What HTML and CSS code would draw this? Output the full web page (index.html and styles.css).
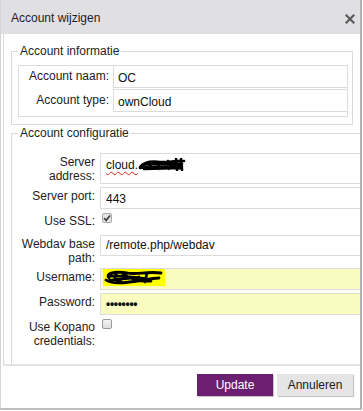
FILE: index.html
```html
<!DOCTYPE html>
<html lang="nl">
<head>
<meta charset="utf-8">
<title>Account wijzigen</title>
<link rel="stylesheet" href="styles.css">
</head>
<body>
<div class="dialog">
  <div class="header">
    <span class="title">Account wijzigen</span>
    <svg class="close" width="10" height="10" viewBox="0 0 10 10"><path d="M1.5 1.5 L8.5 8.5 M8.5 1.5 L1.5 8.5" stroke="#5c5c5c" stroke-width="2.2" stroke-linecap="square"/></svg>
  </div>
  <div class="panel">
    <fieldset class="fs-info">
      <legend>Account informatie</legend>
      <div class="info-box">
        <div class="info-row">
          <div class="info-label">Account naam:</div>
          <div class="info-field">OC</div>
        </div>
        <div class="info-row">
          <div class="info-label">Account type:</div>
          <div class="info-field">ownCloud</div>
        </div>
      </div>
    </fieldset>
    <fieldset class="fs-config">
      <legend>Account configuratie</legend>
      <div class="cfg-row">
        <div class="cfg-label">Server address:</div>
        <div class="cfg-field cfg-tall"><span class="spell">cloud.</span><svg class="scribble" width="48" height="13" viewBox="0 0 48 13"><path d="M2 9 C6 4 14 3 22 4 C30 5 38 2 46 3 M2 10 C10 8 24 9 44 8 M4 7 C14 5 30 6 44 6 M6 11 L44 10 M38 1 L39 12 M43 1 L44 12 M30 3 L31 11 M12 5 L13 11 M20 4 L21 11" stroke="#000" stroke-width="2.6" fill="none" stroke-linecap="round"/></svg></div>
      </div>
      <div class="cfg-row">
        <div class="cfg-label">Server port:</div>
        <div class="cfg-field">443</div>
      </div>
      <div class="cfg-row">
        <div class="cfg-label">Use SSL:</div>
        <div class="cfg-check"><span class="cb cb-checked"><svg width="8" height="8" viewBox="0 0 8 8"><path d="M1 4.2 L3.2 6.4 L7 1.5" stroke="#444" stroke-width="1.8" fill="none"/></svg></span></div>
      </div>
      <div class="cfg-row">
        <div class="cfg-label">Webdav base path:</div>
        <div class="cfg-field cfg-short">/remote.php/webdav</div>
      </div>
      <div class="cfg-row">
        <div class="cfg-label">Username:</div>
        <div class="cfg-field cfg-auto"><svg class="hilite" width="62" height="17" viewBox="0 0 62 17"><rect x="0" y="0" width="62" height="17" fill="#ffff00"/><path d="M6 9 C2 4 12 2 24 4 C34 6 44 2 58 4 M3 11 C8 15 24 14 40 11 C46 10 52 9 56 9 M8 7 C18 6 30 8 44 10 M20 5 C26 9 36 13 48 12 M44 4 L42 13 M5 12 C12 10 26 10 36 8 M14 4 C10 8 12 12 18 13" stroke="#000" stroke-width="2.8" fill="none" stroke-linecap="round"/></svg></div>
      </div>
      <div class="cfg-row">
        <div class="cfg-label">Password:</div>
        <div class="cfg-field cfg-auto cfg-pass">••••••••</div>
      </div>
      <div class="cfg-row">
        <div class="cfg-label">Use Kopano credentials:</div>
        <div class="cfg-check"><span class="cb"></span></div>
      </div>
    </fieldset>
  </div>
  <div class="footer">
    <button class="btn btn-primary">Update</button>
    <button class="btn">Annuleren</button>
  </div>
</div>
</body>
</html>
```
FILE: styles.css
```css
* { box-sizing: border-box; }
html, body { margin: 0; padding: 0; background: #fff; }
body { font: 12px/14px "Liberation Sans", Arial, sans-serif; color: #222; }

.dialog {
  width: 362px;
  height: 410px;
  display: flex;
  flex-direction: column;
  background: #fff;
  border-left: 1px solid #d4d4d4;
  border-right: 2px solid #b2b2b2;
  border-bottom: 2px solid #bdbdbd;
}

.header {
  height: 34px;
  flex: none;
  background: #e0dfe2;
  display: flex;
  justify-content: space-between;
  align-items: flex-start;
  padding: 11px 5px 0 10px;
  color: #1e1e1e;
}
.close { margin-top: 3px; }

.panel {
  height: 332px;
  flex: none;
  margin-left: 2px;
  border-left: 1px solid #dcdcdc;
  border-bottom: 2px solid #e2e2e2;
  overflow: hidden;
  padding: 10px 0 0 7px;
}

fieldset { margin: 0; border: 1px solid #d9d9d9; min-width: 0; }
legend { padding: 0 2px; line-height: 14px; color: #1e1e1e; }

.fs-info { width: 342px; padding: 7px 4px 7px 6px; }
.fs-config { width: 390px; margin-top: 1px; padding: 13px 0 30px 6px; }

.info-box { width: 330px; border: 1px solid #dcdcdc; padding-bottom: 4px; }
.info-row { display: flex; height: 23px; }
.info-row:first-child { margin-top: -1px; }
.info-row + .info-row { margin-top: 1px; }
.info-label { width: 94px; flex: none; text-align: right; padding: 4px 4px 0 0; }
.info-field { flex: 1; border: 1px solid #dcdcdc; border-right: none; padding: 5px 0 0 4px; color: #111; }

.cfg-row { display: flex; margin-bottom: 3px; }
.cfg-label { width: 82px; flex: none; text-align: right; padding: 2px 5px 0 0; }
.cfg-field {
  width: 300px;
  height: 22px;
  border: 1px solid #dcdcdc;
  padding: 4px 0 0 5px;
  color: #111;
  white-space: nowrap;
}
.cfg-tall { height: 31px; padding-top: 4px; }
.cfg-short { height: 21px; padding-top: 2px; }
.cfg-auto { background: #fafbbf; }
.cfg-auto:has(.hilite) { padding: 0 0 0 2px; }
.cfg-pass { padding-top: 3px; font-weight: bold; letter-spacing: -0.3px; }

.spell { text-decoration: underline wavy #e02020; text-decoration-thickness: 1px; text-underline-offset: 2px; }
.scribble { vertical-align: -2px; }
.hilite { display: block; }

.cfg-check { height: 20px; padding: 1px 0 0 2px; }
.cb {
  display: flex;
  align-items: center;
  justify-content: center;
  width: 10px;
  height: 10px;
  border: 1px solid #9a9a9a;
  border-radius: 2px;
  background: linear-gradient(#f4f4f4, #dedede);
}
.cb-checked { border-color: #a8a8a8; background: #e6e6e6; }

.footer {
  flex: 1;
  display: flex;
  justify-content: flex-end;
  align-items: flex-start;
  gap: 4px;
  padding: 8px 7px 0 0;
}
.btn {
  width: 76px;
  height: 22px;
  border: none;
  border-radius: 0;
  background: #e5e5e5;
  color: #1a1a1a;
  font: 12px/14px "Liberation Sans", Arial, sans-serif;
  box-shadow: 1px 1px 1px rgba(0, 0, 0, 0.22);
  padding: 0;
}
.btn-primary { background: #6c1f70; color: #fff; }
```
